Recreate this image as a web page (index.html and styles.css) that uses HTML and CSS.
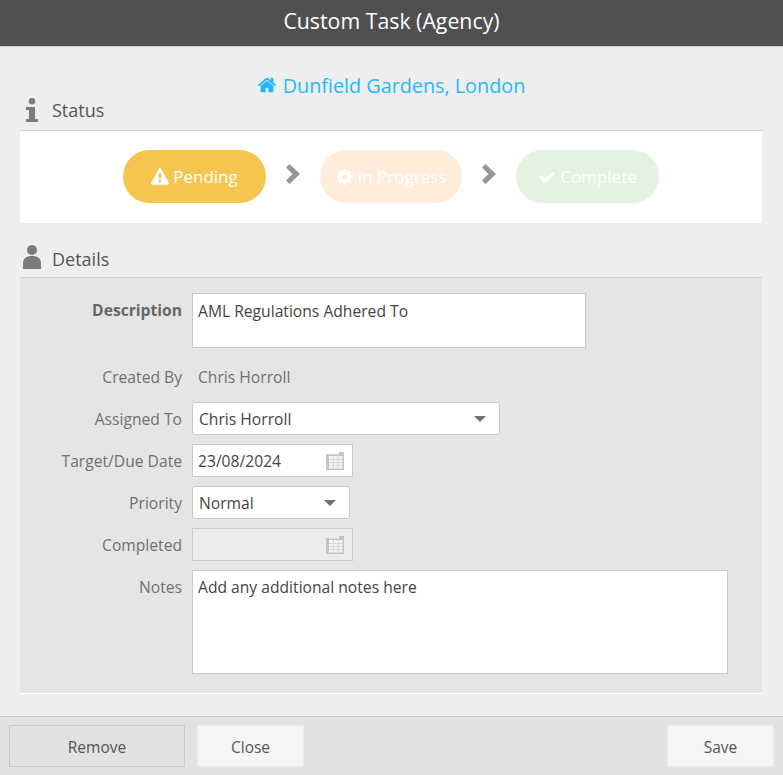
FILE: index.html
```html
<!DOCTYPE html>
<html lang="en">
<head>
<meta charset="utf-8">
<title>Custom Task (Agency)</title>
<link rel="stylesheet" href="styles.css">
</head>
<body>
<div class="dialog">
  <header class="title">Custom Task (Agency)</header>
  <main class="content">
    <a class="address">
      <svg class="home" viewBox="0 0 1792 1792"><path d="M1472 992v480q0 26-19 45t-45 19h-384v-384h-256v384h-384q-26 0-45-19t-19-45v-480q0-1 .5-3t.5-3l575-474 575 474q1 2 1 6zm223-69l-62 74q-8 9-21 11h-3q-13 0-21-7l-692-577-692 577q-12 8-24 7-13-2-21-11l-62-74q-8-10-7-23.5t11-21.5l719-599q32-26 76-26t76 26l244 204v-195q0-14 9-23t23-9h192q14 0 23 9t9 23v408l219 182q10 8 11 21.5t-7 23.5z"/></svg>
      <span>Dunfield Gardens, London</span>
    </a>
    <div class="section-head status-head">
      <svg class="sec-icon info" viewBox="0 0 12 24"><circle cx="6" cy="3.2" r="3.2"/><path d="M0 9h9v12h3v3H0v-3h3v-9H0z"/></svg>
      <span class="head-text">Status</span>
    </div>
    <section class="status-panel">
      <div class="pill pending">
        <svg class="pill-icon warn" viewBox="0 0 1792 1792"><path d="M1024 1375v-190q0-14-9.500-23.500t-22.500-9.500h-192q-13 0-22.500 9.500t-9.500 23.500v190q0 14 9.500 23.500t22.500 9.500h192q13 0 22.500-9.500t9.500-23.500zm-2-374l18-459q0-12-10-19-13-11-24-11h-220q-11 0-24 11-10 7-10 21l17 457q0 10 10 16.500t24 6.500h185q14 0 23.500-6.500t10.500-16.500zm-14-934l768 1408q35 63-2 126-17 29-46.500 46t-63.500 17h-1536q-34 0-63.500-17t-46.500-46q-37-63-2-126l768-1408q17-31 47-49t65-18 65 18 47 49z"/></svg>
        <span>Pending</span>
      </div>
      <div class="step-arrow"><svg viewBox="0 0 14 20"><path d="M3.500 0L14 10 3.500 20 0 16.500 6.500 10 0 3.500z"/></svg></div>
      <div class="pill progress">
        <svg class="pill-icon" viewBox="0 0 1792 1792"><path fill-rule="evenodd" d="M1152 896q0-106-75-181t-181-75-181 75-75 181 75 181 181 75 181-75 75-181zm512-109v222q0 12-8 23t-20 13l-185 28q-19 54-39 91 35 50 107 138 10 12 10 25t-9 23q-27 37-99 108t-94 71q-12 0-26-9l-138-108q-44 23-91 38-16 136-29 186-7 28-36 28h-222q-14 0-24.500-8.500t-11.500-21.500l-28-184q-49-16-90-37l-141 107q-10 9-25 9-14 0-25-11-126-114-165-168-7-10-7-23 0-12 8-23 15-21 51-66.500t54-70.500q-27-50-41-99l-183-27q-13-2-21-12.500t-8-23.500v-222q0-12 8-23t19-13l186-28q14-46 39-92-40-57-107-138-10-12-10-24 0-10 9-23 26-36 98.500-107.500t94.500-71.500q13 0 26 10l138 107q44-23 91-38 16-136 29-186 7-28 36-28h222q14 0 24.500 8.500t11.500 21.500l28 184q49 16 90 37l142-107q9-9 24-9 13 0 25 10 129 119 165 170 7 8 7 22 0 12-8 23-15 21-51 66.500t-54 70.500q26 50 41 98l183 28q13 2 21 12.500t8 23.500z"/></svg>
        <span>In Progress</span>
      </div>
      <div class="step-arrow"><svg viewBox="0 0 14 20"><path d="M3.500 0L14 10 3.500 20 0 16.500 6.500 10 0 3.500z"/></svg></div>
      <div class="pill complete">
        <svg class="pill-icon" viewBox="0 0 1792 1792"><path d="M1671 566q0 40-28 68l-724 724-136 136q-28 28-68 28t-68-28l-136-136-362-362q-28-28-28-68t28-68l136-136q28-28 68-28t68 28l294 295 656-657q28-28 68-28t68 28l136 136q28 28 28 68z"/></svg>
        <span>Complete</span>
      </div>
    </section>
    <div class="section-head details-head">
      <svg class="sec-icon person" viewBox="0 0 18 24"><circle cx="9" cy="5" r="5"/><path d="M0 24v-6c0-4.500 3.500-7 9-7s9 2.500 9 7v6z"/></svg>
      <span>Details</span>
    </div>
    <section class="details-panel">
      <div class="label strong">Description</div>
      <div class="box description">AML Regulations Adhered To</div>

      <div class="label plain-label">Created By</div>
      <div class="plain-value">Chris Horroll</div>

      <div class="label ctl-label">Assigned To</div>
      <div class="box select assigned"><span>Chris Horroll</span><i class="caret"></i></div>

      <div class="label ctl-label">Target/Due Date</div>
      <div class="box date"><span>23/08/2024</span>
        <svg class="cal" viewBox="0 0 18 18"><path class="cal-bg" d="M0 2h13V0h5v18H0z"/><path class="cal-line" d="M3 7.500H16.500M3 10.500H16.500M3 13.500H16.500M7.500 4V16.500M12 4V16.500"/><path class="cal-dark" d="M0 2h3v16H0zM13 0h5v18H3v-1.500h13.500V4H3V2.500h10z"/></svg>
      </div>

      <div class="label ctl-label">Priority</div>
      <div class="box select priority"><span>Normal</span><i class="caret"></i></div>

      <div class="label ctl-label">Completed</div>
      <div class="box date disabled"><span></span>
        <svg class="cal" viewBox="0 0 18 18"><path class="cal-bg" d="M0 2h13V0h5v18H0z"/><path class="cal-line" d="M3 7.500H16.500M3 10.500H16.500M3 13.500H16.500M7.500 4V16.500M12 4V16.500"/><path class="cal-dark" d="M0 2h3v16H0zM13 0h5v18H3v-1.500h13.500V4H3V2.500h10z"/></svg>
      </div>

      <div class="label ctl-label">Notes</div>
      <div class="box notes">Add any additional notes here</div>
    </section>
  </main>
  <footer class="actions">
    <div class="btn remove">Remove</div>
    <div class="btn close">Close</div>
    <div class="btn save">Save</div>
  </footer>
</div>
</body>
</html>
```
FILE: styles.css
```css
* { box-sizing: border-box; }
html, body { margin: 0; height: 100%; }
body { font-family: "Open Sans", "Noto Sans", "Liberation Sans", sans-serif; color: #555; background: #eee; overflow: hidden; }
.dialog { width: 783px; height: 775px; display: flex; flex-direction: column; }
.title { height: 47px; flex: none; background: #505050; border-bottom: 1px solid #ccc; color: #fff; font-size: 21.300px; line-height: 42px; text-align: center; }
.content { flex: 1; padding: 0 21px 0 20px; background: #eee; }
.address { display: flex; justify-content: center; align-items: center; gap: 6px; margin-top: 25px; height: 26px; color: #1fb9ff; font-size: 19.800px; }
.home { width: 20px; height: 20px; fill: #1fb9ff; }
.section-head { display: flex; align-items: center; font-size: 18px; border-bottom: 1px solid #d2d2d2; color: #555; }
.status-head { height: 33px; padding-left: 6px; gap: 14px; }
.head-text { margin-top: -8px; }
.details-head { height: 55px; padding-left: 3px; gap: 11px; padding-top: 17px; }
.sec-icon { fill: #7b7b7b; flex: none; }
.info { width: 12px; height: 24px; margin-top: -8px; }
.person { width: 18px; height: 24px; margin-top: -3px; }
.status-panel { height: 92px; background: #fff; display: flex; justify-content: center; padding-top: 19px; }
.pill { width: 143px; height: 53px; border-radius: 26.5px; color: #fff; display: flex; align-items: center; justify-content: center; gap: 4px; font-size: 17px; }
.pending { background: #f6c550; }
.progress { width: 142px; background: #ffecdb; }
.complete { background: #e2f3e2; }
.pill-icon { width: 18px; height: 18px; fill: #fff; flex: none; }
.step-arrow { width: 54px; height: 53px; display: flex; justify-content: center; padding-top: 14px; }
.step-arrow svg { width: 14px; height: 20px; fill: #979797; }
.details-panel { height: 416px; background: #e5e5e5; border-bottom: 1px solid #fff; display: grid; grid-template-columns: 162px 1fr; column-gap: 10px; grid-template-rows: 55px 36px 33px 33px 33px 33px 104px; row-gap: 9px; padding-top: 15px; font-size: 15.650px; align-content: start; }
.label { text-align: right; color: #707070; }
.strong { font-weight: 700; color: #666; padding-top: 6px; }
.plain-label { padding-top: 9px; }
.ctl-label { padding-top: 6px; }
.plain-value { color: #707070; padding: 9px 0 0 6px; }
.box { background: #fff; border: 1px solid #c9c9c9; color: #444; }
.description { width: 394px; padding: 6px 5px; }
.notes { width: 536px; padding: 5px; }
.select { border-radius: 3px; display: flex; align-items: center; justify-content: space-between; padding: 0 13px 0 6px; }
.assigned { width: 308px; }
.priority { width: 158px; }
.caret { width: 0; height: 0; border-left: 6.5px solid transparent; border-right: 6.5px solid transparent; border-top: 6.5px solid #707070; }
.date { width: 161px; display: flex; align-items: center; justify-content: space-between; padding: 0 8px 0 5px; }
.disabled { background: #ececec; }
.cal { width: 18px; height: 18px; flex: none; }
.cal-bg { fill: #f4f4f4; }
.cal-line { stroke: #d8d8d8; stroke-width: 1; fill: none; }
.cal-dark { fill: #c4c4c4; }
.actions { height: 59px; flex: none; background: #e2e2e2; border-top: 1px solid #ccc; display: flex; align-items: flex-start; padding: 8px 9px 0 9px; gap: 12px; }
.btn { height: 42px; display: flex; align-items: center; justify-content: center; font-size: 15.500px; color: #555; background: #f5f5f5; border: 1px solid #eaeaea; padding-top: 1px; }
.remove { width: 176px; background: #e2e2e2; border-color: #c9c9c9; }
.close { width: 107px; }
.save { width: 107px; margin-left: auto; }
```
